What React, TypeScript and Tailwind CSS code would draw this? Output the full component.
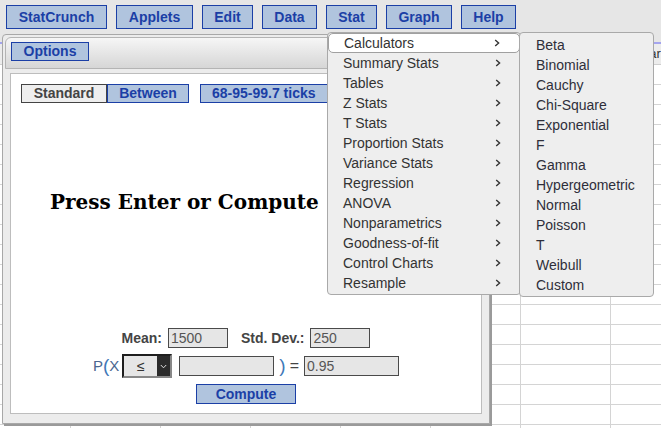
import React from "react";

const topMenu = [
  { label: "StatCrunch", w: "w-[101px]" },
  { label: "Applets", w: "w-[77px]" },
  { label: "Edit", w: "w-[51px]" },
  { label: "Data", w: "w-[55px]" },
  { label: "Stat", w: "w-[51px]" },
  { label: "Graph", w: "w-[66px]" },
  { label: "Help", w: "w-[55px]" },
];

const statItems = [
  "Calculators",
  "Summary Stats",
  "Tables",
  "Z Stats",
  "T Stats",
  "Proportion Stats",
  "Variance Stats",
  "Regression",
  "ANOVA",
  "Nonparametrics",
  "Goodness-of-fit",
  "Control Charts",
  "Resample",
];

const calcItems = [
  "Beta",
  "Binomial",
  "Cauchy",
  "Chi-Square",
  "Exponential",
  "F",
  "Gamma",
  "Hypergeometric",
  "Normal",
  "Poisson",
  "T",
  "Weibull",
  "Custom",
];

const cols = ["", "var1", "var2", "var3", "var4", "var5", "var6", "var7"];

function Chevron() {
  return (
    <svg width="6" height="8" viewBox="0 0 6 8" className="shrink-0">
      <path d="M1.2 1 L4.6 4 L1.2 7" fill="none" stroke="#333" strokeWidth="1.4" />
    </svg>
  );
}

// Blue StatCrunch-style button
function BlueBtn({ children, className = "" }: { children: React.ReactNode; className?: string }) {
  return (
    <div
      className={`flex items-center justify-center border border-[#1b3fa6] bg-[#b0c4de] text-[14px] font-bold text-[#1b3fa6] ${className}`}
    >
      {children}
    </div>
  );
}

function Field({ value, w }: { value?: string; w: string }) {
  return (
    <div className={`flex h-[20px] items-center border border-[#4a4a4a] bg-[#e6e6e6] pl-[2px] text-[14px] text-[#555] ${w}`}>
      {value}
    </div>
  );
}

function Spreadsheet() {
  return (
    <div className="flex-1 overflow-hidden bg-white">
      <div className="flex h-[23px] border-t-2 border-b border-[#a4a4ee] border-b-[#cfcfcf] bg-[#ececec]">
        {cols.map((c, i) => (
          <div
            key={i}
            className={`flex shrink-0 items-center justify-center border-r border-[#cfcfcf] text-[13px] text-[#333] ${i === 0 ? "w-[71px]" : "w-[90px]"}`}
          >
            {c}
          </div>
        ))}
      </div>
      {Array.from({ length: 19 }).map((_, r) => (
        <div key={r} className="flex h-[20px] border-b border-[#d4d4d4]">
          {cols.map((_, i) => (
            <div key={i} className={`shrink-0 border-r border-[#d4d4d4] ${i === 0 ? "w-[71px]" : "w-[90px]"}`} />
          ))}
        </div>
      ))}
    </div>
  );
}

function NormalCalculator() {
  return (
    <div className="absolute left-[2px] top-[34px] h-[390px] w-[488px] rounded-tl-[4px] border border-[#a8a8a8] bg-[#ececec] p-[2px] shadow-[2px_2px_0_#9a9a9a]">
      <div className="h-[32px] rounded-tl-[6px] border border-[#b4b4b4] bg-gradient-to-b from-[#f6f6f6] to-[#d6d6d6] pl-[5px] pt-[4px]">
        <BlueBtn className="h-[19px] w-[78px]">Options</BlueBtn>
      </div>
      <div className="ml-[5px] mt-[4px] flex h-[341px] w-[472px] flex-col border border-[#bdbdbd] bg-white">
        <div className="flex pl-[10px] pt-[10px]">
          <div className="flex h-[19px] w-[86px] items-center justify-center border border-[#444] bg-[#eeeeee] text-[14px] font-bold text-[#444]">
            Standard
          </div>
          <BlueBtn className="h-[19px] w-[82px]">Between</BlueBtn>
          <BlueBtn className="ml-[11px] h-[19px] w-[140px] justify-start pl-[11px]">68-95-99.7 ticks</BlueBtn>
        </div>

        <div className="flex-1 pl-[39px] pt-[87px]">
          <div className="font-['DejaVu_Serif',serif] text-[20px] font-bold leading-[24px] text-black">
            Press Enter or Compute
          </div>
        </div>

        <div className="flex h-[20px] items-center justify-center">
          <span className="mr-[6px] text-[14px] font-bold text-[#444]">Mean:</span>
          <Field value="1500" w="w-[60px]" />
          <span className="ml-[13px] mr-[6px] text-[14px] font-bold text-[#444]">Std. Dev.:</span>
          <Field value="250" w="w-[60px]" />
        </div>

        <div className="mt-[6px] flex h-[24px] items-center justify-center">
          <span className="text-[15px] text-[#4a6690]">P</span>
          <span className="text-[19px] font-light leading-[20px] text-[#3f78b8]">(</span>
          <span className="text-[15px] text-[#4a6690]">X</span>
          <div className="ml-[3px] flex h-[24px] w-[50px] border-2 border-[#1e1e1e] border-r-[#888] border-b-[#888] bg-[#e6e6e6]">
            <div className="flex flex-1 items-center justify-center text-[14px] text-[#333]">≤</div>
            <div className="flex w-[13px] items-center justify-center bg-[#2b2b2b]">
              <svg width="7" height="5" viewBox="0 0 7 5">
                <path d="M0.8 1 L3.5 3.8 L6.2 1" fill="none" stroke="#ddd" strokeWidth="1" />
              </svg>
            </div>
          </div>
          <div className="ml-[7px]">
            <Field w="w-[95px]" />
          </div>
          <span className="ml-[5px] text-[19px] font-light leading-[20px] text-[#3f78b8]">)</span>
          <span className="ml-[4px] mr-[5px] text-[16px] text-[#444]">=</span>
          <Field value="0.95" w="w-[95px]" />
        </div>

        <div className="mt-[6px] flex justify-center pb-[9px]">
          <BlueBtn className="h-[20px] w-[100px]">Compute</BlueBtn>
        </div>
      </div>
    </div>
  );
}

export default function App() {
  return (
    <div className="relative flex h-[428px] w-[661px] flex-col overflow-hidden bg-[#e6e6e6] font-['Liberation_Sans',Arial,sans-serif]">
      <div className="flex h-[42px] shrink-0 items-start gap-[9px] pl-[6px] pt-[5px]">
        {topMenu.map((m) => (
          <BlueBtn key={m.label} className={`h-[24px] ${m.w}`}>
            {m.label}
          </BlueBtn>
        ))}
      </div>
      <Spreadsheet />

      <NormalCalculator />

      {/* Stat menu */}
      <div className="absolute left-[327px] top-[32px] w-[194px] rounded-[4px] border border-[#a9a9a9] bg-[#eeeeee] pb-[1px]">
        {statItems.map((item, i) => (
          <div
            key={item}
            className={`flex h-[20px] items-center justify-between pl-[15px] pr-[19px] text-[14px] text-[#333] ${
              i === 0 ? "rounded-[5px] border border-[#a0a0a0] bg-white" : ""
            }`}
          >
            <span>{item}</span>
            <Chevron />
          </div>
        ))}
      </div>

      {/* Calculators submenu */}
      <div className="absolute left-[519px] top-[32px] w-[135px] rounded-[4px] border border-[#a9a9a9] bg-[#eeeeee] pb-[1px] pt-[2px]">
        {calcItems.map((item) => (
          <div key={item} className="flex h-[20px] items-center pl-[16px] text-[14px] text-[#2e2e3a]">
            {item}
          </div>
        ))}
      </div>
    </div>
  );
}
